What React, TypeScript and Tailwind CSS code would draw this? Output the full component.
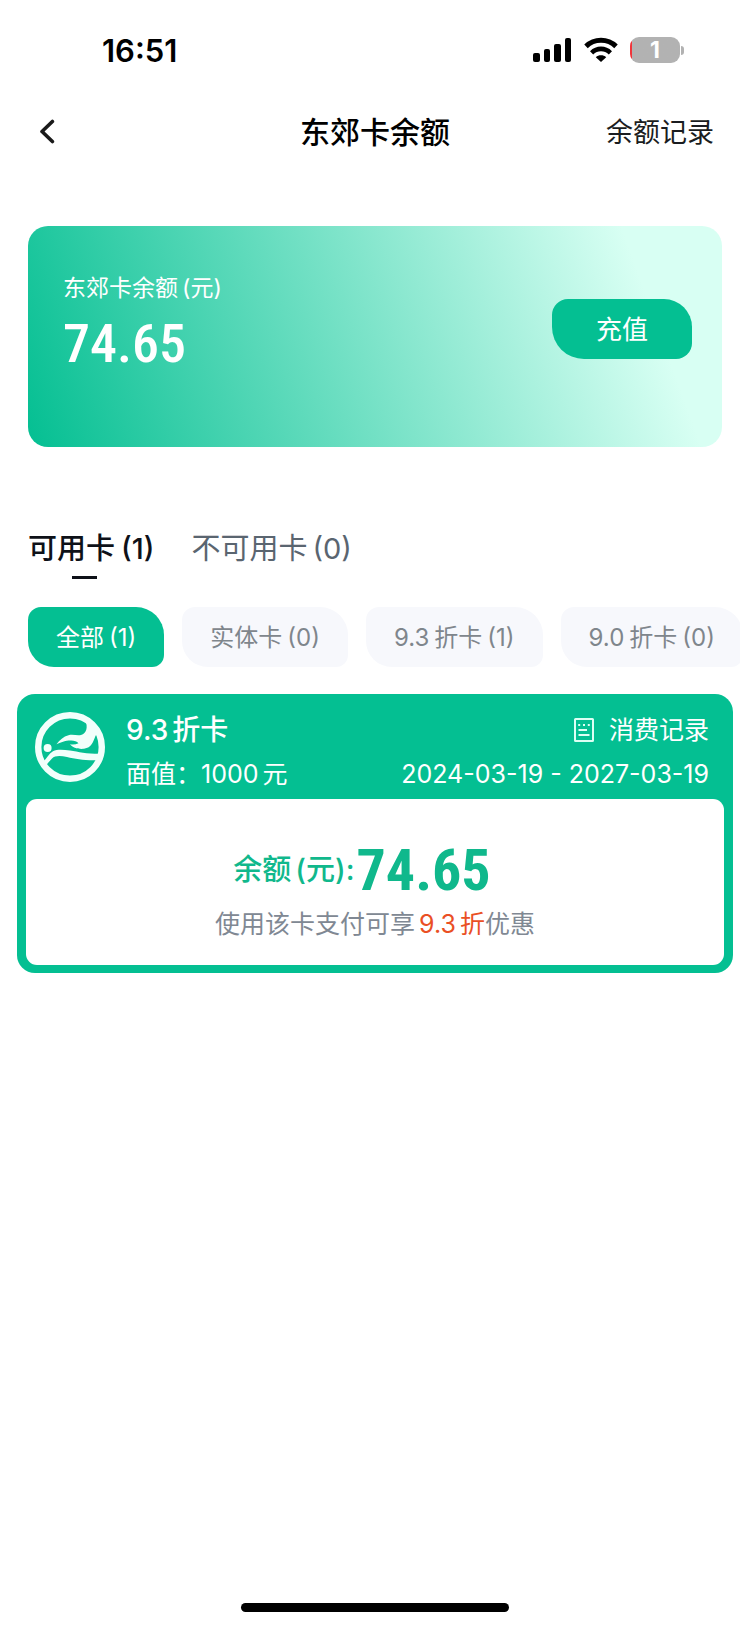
import { ReactNode } from "react";

const FONT = "font-['Inter','Noto_Sans_CJK_SC',sans-serif]";
const AMOUNT_FONT = "font-['Roboto_Condensed','Roboto',sans-serif]";

function StatusBar() {
  return (
    <div className="flex h-[100px] items-center justify-between pl-[102px] pr-[66px]">
      <span className="pt-[2px] text-[31px] font-semibold leading-9 text-black">16:51</span>
      <div className="flex items-center gap-[12px]">
        <svg width="39" height="26" viewBox="0 0 39 26" aria-hidden="true">
          <rect x="0" y="16" width="7" height="9" rx="2" />
          <rect x="11" y="12" width="6" height="13" rx="2" />
          <rect x="21" y="7" width="7" height="18" rx="2" />
          <rect x="32" y="1" width="6" height="24" rx="2" />
        </svg>
        <svg width="34" height="26" viewBox="0 0 34 26" fill="none" stroke="#000" strokeWidth="5" aria-hidden="true">
          <path d="M2 9.400C10.300 1.300 23.700 1.300 32 9.400" />
          <path d="M7.600 15.800C13 10.600 21 10.600 26.400 15.800" strokeWidth="4.600" />
          <path d="M17 25L11.800 20.200C14.600 17.600 19.400 17.600 22.200 20.200Z" fill="#000" stroke="none" />
        </svg>
        <div className="flex items-center gap-px">
          <div className="flex h-[26px] w-[50px] items-center justify-center rounded-[9px] bg-linear-to-r from-[#f0353b] from-[2px] to-[#b2b2b2] to-[2px] text-[23px] font-bold leading-[26px] text-white">
            <span>1</span>
          </div>
          <div className="h-[9px] w-[3px] rounded-r-full bg-[#b2b2b2]" />
        </div>
      </div>
    </div>
  );
}

function Header() {
  return (
    <header className="grid h-[64px] grid-cols-[1fr_auto_1fr] items-center px-[36px]">
      <button type="button" aria-label="返回" className="flex h-10 w-6 items-center justify-center">
        <svg width="16" height="26" viewBox="0 0 16 26" fill="none" stroke="#1a1a1a" strokeWidth="3.600" strokeLinecap="round" strokeLinejoin="round" aria-hidden="true">
          <path d="M12.400 2.500L2 12.500L12.400 22.500" />
        </svg>
      </button>
      <h1 className="text-[30px] font-medium leading-10 text-black">东郊卡余额</h1>
      <a href="#balance-records" className="justify-self-end pt-[2px] text-[27px] leading-10 text-[#1a1c20]">
        余额记录
      </a>
    </header>
  );
}

function BalanceCard() {
  return (
    <section className="mx-[28px] mt-[62px] flex min-h-[221px] items-start justify-between rounded-[20px] bg-[linear-gradient(70deg,#04bf92_0%,#d8fff3_87%)] pl-[35px] pr-[30px] pt-[44px]">
      <div className="text-white">
        <p className="flex gap-1 text-[23px] leading-9">
          <span>东郊卡余额</span>
          <span>(元)</span>
        </p>
        <p className={`${AMOUNT_FONT} text-[54px] font-medium leading-[76px]`}>74.65</p>
      </div>
      <button type="button" className="mt-[29px] h-[60px] w-[140px] rounded-[16px_28px_16px_32px] bg-[#04bf92] pt-[2px] text-[26px] leading-10 text-white">
        充值
      </button>
    </section>
  );
}

function Tabs() {
  return (
    <div role="tablist" className="mt-[79px] flex items-start gap-[37px] pl-[28px]">
      <button type="button" role="tab" aria-selected="true" className="flex flex-col gap-1 text-[29px] font-medium leading-[46px] text-[#0e1118]">
        <span className="flex gap-[6px]">
          <span>可用卡</span>
          <span>(1)</span>
        </span>
        <span className="flex justify-center pr-[14px]">
          <span className="h-[3px] w-[25px] bg-[#0e1118]" />
        </span>
      </button>
      <button type="button" role="tab" aria-selected="false" className="flex gap-[5px] text-[29px] leading-[46px] text-[#5a6570]">
        <span>不可用卡</span>
        <span>(0)</span>
      </button>
    </div>
  );
}

function Chip({ active = false, children }: { active?: boolean; children: ReactNode }) {
  return (
    <button
      type="button"
      aria-pressed={active}
      className={`flex h-[60px] shrink-0 items-center gap-[5px] rounded-[13px_28px_12px_26px] px-[28px] pt-[2px] text-[24px] leading-9 ${
        active ? "bg-[#04bf92] text-white" : "bg-[#f7f8fc] text-[#7f868c]"
      }`}
    >
      {children}
    </button>
  );
}

function Chips() {
  return (
    <div className="ml-[28px] mr-[10px] mt-[28px] flex gap-[18px] overflow-hidden">
      <Chip active>
        <span>全部</span>
        <span>(1)</span>
      </Chip>
      <Chip>
        <span>实体卡</span>
        <span>(0)</span>
      </Chip>
      <Chip>
        <span>9.3</span>
        <span>折卡</span>
        <span>(1)</span>
      </Chip>
      <Chip>
        <span>9.0</span>
        <span>折卡</span>
        <span>(0)</span>
      </Chip>
    </div>
  );
}

function SwimLogo() {
  return (
    <svg width="70" height="70" viewBox="0 0 70 70" className="shrink-0" aria-hidden="true">
      <circle cx="35" cy="35" r="31.800" fill="none" stroke="#f2fffb" strokeWidth="6.400" />
      <g fill="#f2fffb">
        <circle cx="12.600" cy="36" r="4" />
        <path d="M21.500 32.200C24.500 28 28.500 24.500 33.500 23.200C38 22.200 42 23.800 46 23C51.500 21.500 53 15 50.500 9L63 20C60.500 23 59.800 26 58.300 29.300C56.500 33.500 54 36 49 36.800C43 37.400 37.500 35.500 35 32.200C38 32.800 41 32.400 43.500 31.200C41.500 28.800 38 28 33.500 28.600C29 29.200 25.500 30.500 21.500 32.200Z" />
        <path d="M8 50C12 46 14 41.500 18 39.200C22 37 28 37.500 35 38.400C44 39.800 52 42 66 41.800L64 48.200C50 48.800 41 47 32 45C25 43.500 20 43.500 17 46.500C14.500 49 13 51.500 10 54Z" />
      </g>
    </svg>
  );
}

function RecordIcon() {
  return (
    <svg width="20" height="24" viewBox="0 0 20 24" fill="none" stroke="#dcfff4" strokeWidth="2" aria-hidden="true">
      <rect x="1" y="1" width="18" height="22" rx="0.500" />
      <path d="M4.200 7h2M9 7h2M13.800 7h2M4.500 12h8.500" />
      <path d="M4.500 17h11" />
    </svg>
  );
}

function MemberCard() {
  return (
    <section className="mx-[17px] mt-[27px] rounded-[18px] bg-[#04bf92] px-[9px] pb-2 pt-[14px]">
      <div className="flex items-start gap-[21px] pl-[9px] pr-[15px]">
        <div className="pt-1">
          <SwimLogo />
        </div>
        <div className="flex-1 pb-[3px] text-white">
          <div className="flex items-center justify-between leading-[44px]">
            <h2 className="flex gap-1 text-[28px] font-medium">
              <span>9.3</span>
              <span>折卡</span>
            </h2>
            <a href="#usage-records" className="flex items-center gap-[15px] text-[25px]">
              <RecordIcon />
              消费记录
            </a>
          </div>
          <div className="flex items-center justify-between text-[25px] leading-[44px]">
            <p className="flex gap-1">
              <span>面值：1000</span>
              <span>元</span>
            </p>
            <p>2024-03-19 - 2027-03-19</p>
          </div>
        </div>
      </div>
      <div className="flex min-h-[166px] flex-col items-center rounded-[11px] bg-white pt-[37px]">
        <p className="flex items-center pr-[26px] text-[#10b88c]">
          <span className="flex gap-1 pr-[2px] text-[29px] font-medium leading-[68px]">
            <span>余额</span>
            <span>(元):</span>
          </span>
          <span className={`${AMOUNT_FONT} text-[58px] font-bold leading-[68px]`}>74.65</span>
        </p>
        <p className="flex text-[25px] leading-10 text-[#808893]">
          <span>使用该卡支付可享</span>
          <span className="flex gap-1 pl-1 text-[#ea4f24]">
            <span>9.3</span>
            <span>折</span>
          </span>
          <span>优惠</span>
        </p>
      </div>
    </section>
  );
}

export default function App() {
  return (
    <main className={`${FONT} flex min-h-screen flex-col bg-white`}>
      <StatusBar />
      <Header />
      <BalanceCard />
      <Tabs />
      <Chips />
      <MemberCard />
      <div className="mx-auto mb-[14px] mt-auto h-[9px] w-[268px] rounded-full bg-black" />
    </main>
  );
}
